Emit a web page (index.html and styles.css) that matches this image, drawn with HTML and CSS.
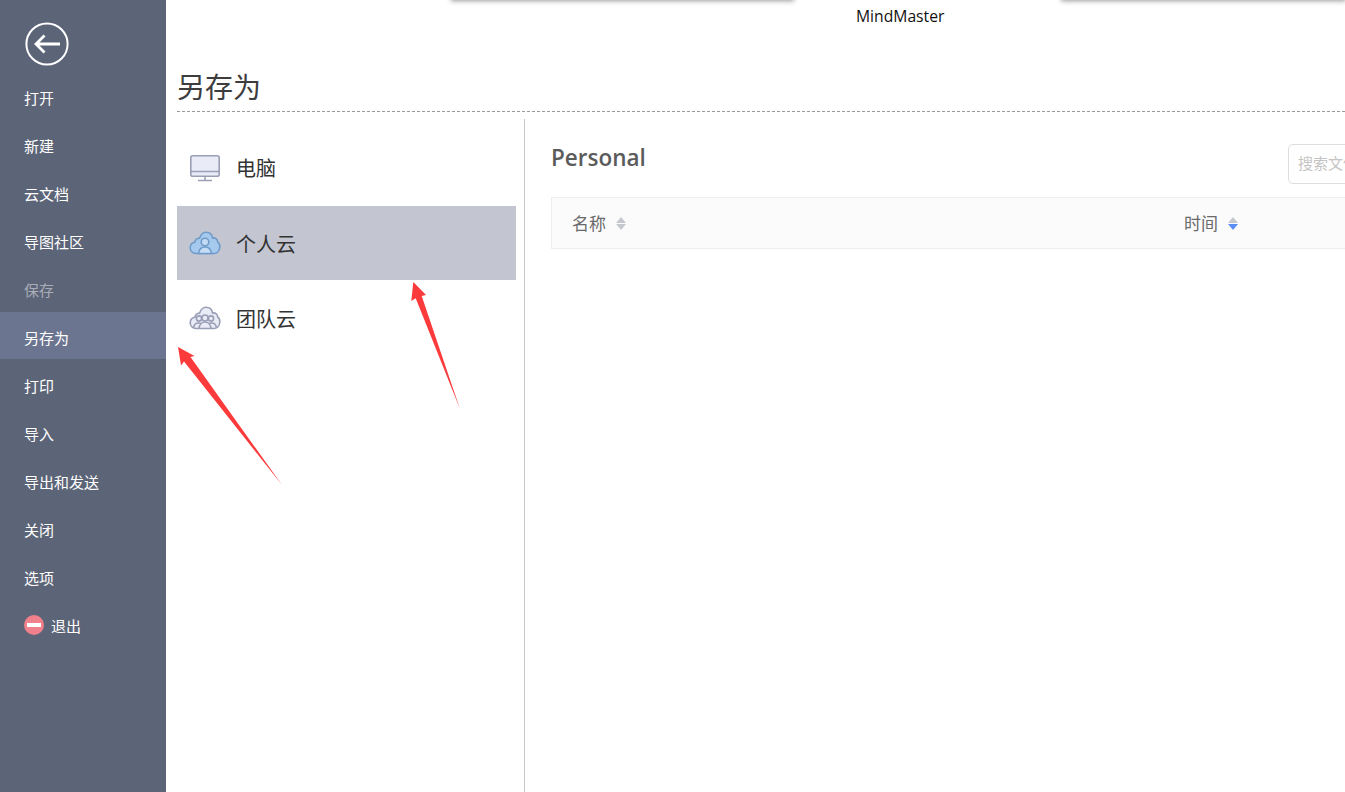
FILE: index.html
```html
<!DOCTYPE html>
<html lang="zh-CN">

<head>
    <meta charset="UTF-8">
    <title>另存为 - MindMaster</title>
    <link rel="stylesheet" href="styles.css">
</head>

<body>
    <aside class="sidebar">
        <div class="back">
            <svg width="44" height="44" viewBox="0 0 44 44" fill="none" stroke="#fff">
                <circle cx="22" cy="22" r="20.6" stroke-width="2" />
                <path d="M35 22H11M19.500 13.500L11 22l8.500 8.500" stroke-width="2.800" />
            </svg>
        </div>
        <nav class="menu">
            <div class="menu-item">打开</div>
            <div class="menu-item">新建</div>
            <div class="menu-item">云文档</div>
            <div class="menu-item">导图社区</div>
            <div class="menu-item disabled">保存</div>
            <div class="menu-item active">另存为</div>
            <div class="menu-item">打印</div>
            <div class="menu-item">导入</div>
            <div class="menu-item">导出和发送</div>
            <div class="menu-item">关闭</div>
            <div class="menu-item">选项</div>
            <div class="menu-item">
                <span class="quit-icon"></span>退出
            </div>
        </nav>
    </aside>

    <main class="main">
        <div class="topbar">
            <span class="tab-shadow tab-left"></span>
            <span class="app-name">MindMaster</span>
            <span class="tab-shadow tab-right"></span>
        </div>

        <h1 class="page-title">另存为</h1>

        <div class="columns">
            <div class="places">
                <div class="place">
                    <svg width="32" height="28" viewBox="0 0 32 28" fill="none" stroke="#9a9fb6" stroke-width="1.6">
                        <rect x="1.800" y="1.800" width="28.400" height="20.400" rx="2" fill="#e9ebf6" />
                        <path d="M2 17.500h28M16 22.500v4M9 26.500h14" />
                    </svg>
                    <span>电脑</span>
                </div>
                <div class="place selected">
                    <svg width="32" height="24" viewBox="0 0 32 24" fill="#a6c9ee" stroke="#6f9bc9" stroke-width="1.600">
                        <path d="M7 22.500c-3.500-.2-5.800-2.800-5.800-5.800 0-2.800 2-5 4.600-5.500C6.500 8.500 8.500 7 10.500 7.300 11.800 3.500 14 1.300 17 1.300c3.500 0 6 2.500 6.600 5.700 3-.5 5 1.600 5.200 4.300 1.400.8 2.200 2.800 2 5-.3 3.500-2.800 6.200-6 6.200z" />
                        <circle cx="16" cy="11" r="3.800" fill="#c4dcf5" />
                        <path d="M9.500 22.500c.5-4 3-6.500 6.500-6.500s6 2.500 6.500 6.500z" fill="#c4dcf5" />
                    </svg>
                    <span>个人云</span>
                </div>
                <div class="place">
                    <svg width="32" height="24" viewBox="0 0 32 24" fill="#e9ebf6" stroke="#9a9fb6" stroke-width="1.600">
                        <path d="M7 22.500c-3.500-.2-5.800-2.800-5.800-5.800 0-2.800 2-5 4.600-5.500C6.500 8.500 8.500 7 10.500 7.300 11.800 3.500 14 1.300 17 1.300c3.500 0 6 2.500 6.600 5.700 3-.5 5 1.600 5.200 4.300 1.400.8 2.200 2.800 2 5-.3 3.500-2.800 6.200-6 6.200z" />
                        <circle cx="10" cy="12.500" r="2.600" />
                        <circle cx="22" cy="12.500" r="2.600" />
                        <circle cx="16" cy="12" r="3" />
                        <path d="M4.500 22c.3-3 2.500-5 5-5 1 0 2 .3 2.800 1M27.500 22c-.3-3-2.500-5-5-5-1 0-2 .3-2.800 1M10 22.500c.4-4 3-6.500 6-6.500s5.600 2.500 6 6.500" fill="none" />
                    </svg>
                    <span>团队云</span>
                </div>
            </div>

            <div class="files">
                <div class="files-head">
                    <h2 class="folder-name">Personal</h2>
                    <div class="search">搜索文件</div>
                </div>
                <div class="file-table">
                    <div class="col col-name">名称
                        <span class="sort"><i class="up"></i><i class="down"></i></span>
                    </div>
                    <div class="col col-time">时间
                        <span class="sort sort-down"><i class="up"></i><i class="down"></i></span>
                    </div>
                </div>
            </div>
        </div>
    </main>

    <!-- annotation arrows drawn over the screenshot -->
    <svg class="arrows" width="1345" height="792" viewBox="0 0 1345 792" fill="#fb3b3b">
        <path d="M178 347L194.500 356 190.500 357 282 485 184 361.500 181 365.500z" />
        <path d="M413.300 282L426 295 421.700 296 460 409 415.700 298.300 411.300 301z" />
    </svg>
</body>

</html>
```

FILE: styles.css
```css
* {
    box-sizing: border-box;
}

html,
body {
    height: 100%;
}

body {
    margin: 0;
    display: flex;
    overflow: hidden;
    background-color: #fff;
    font-family: "Noto Sans CJK SC", "Noto Sans", sans-serif;
    color: #333;
}

/* left menu */
.sidebar {
    width: 166px;
    flex-shrink: 0;
    background-color: #5c6477;
    color: #fff;
}

.back {
    height: 72px;
    padding: 22px 0 0 25px;
}

.back svg {
    display: block;
}

.menu-item {
    display: flex;
    align-items: center;
    height: 48px;
    padding: 2px 0 0 24px;
    font-size: 15px;
}

.menu-item.disabled {
    color: #a9adb8;
}

.menu-item.active {
    height: 47px;
    margin-bottom: 1px;
    padding-top: 3px;
    background-color: #6b7590;
}

.quit-icon {
    position: relative;
    width: 20px;
    height: 20px;
    margin-right: 7px;
    border-radius: 50%;
    background-color: #f0808c;
}

.quit-icon::after {
    content: "";
    position: absolute;
    left: 3px;
    right: 3px;
    top: 8px;
    height: 4px;
    background-color: #fff;
}

/* main area */
.main {
    flex: 1;
    min-width: 0;
    padding-left: 11px;
}

.topbar {
    display: flex;
    height: 68px;
    margin-left: -11px;
    position: relative;
}

.tab-shadow {
    position: absolute;
    top: -4px;
    height: 4px;
    background-color: #bbb;
    box-shadow: 0 0 5px 1px rgba(0, 0, 0, 0.4);
}

.tab-left {
    left: 286px;
    width: 341px;
}

.tab-right {
    left: 896px;
    right: 0;
}

.app-name {
    margin: 6px 0 0 690px;
    font-family: "Open Sans", sans-serif;
    font-size: 15.700px;
    line-height: 20px;
    color: #111;
}

.page-title {
    height: 44px;
    margin: 0;
    font-size: 28px;
    font-weight: 400;
    line-height: 36px;
    color: #3d3d3d;
    border-bottom: 1px dashed #9a9a9a;
}

.columns {
    display: flex;
    height: 681px;
    margin-top: 7px;
}

.places {
    width: 348px;
    padding: 13px 8px 0 0;
    border-right: 1px solid #c8c8c8;
}

.place {
    display: flex;
    align-items: center;
    gap: 15px;
    height: 74px;
    padding-left: 12px;
    font-size: 20px;
}

.place:first-child {
    padding-bottom: 3px;
}

.place:last-child {
    padding-top: 2px;
}

.place.selected {
    background-color: #c3c6d0;
}

.files {
    flex: 1;
    min-width: 0;
    padding: 0 0 0 26px;
    overflow: hidden;
}

.files-head {
    display: flex;
    justify-content: space-between;
    height: 78px;
    padding-top: 25px;
}

.folder-name {
    margin: 0;
    font-family: "Open Sans", sans-serif;
    font-size: 22.500px;
    font-weight: 600;
    line-height: 28px;
    color: #5b5b5b;
}

.search {
    flex-shrink: 0;
    width: 120px;
    height: 40px;
    margin-right: -63px;
    padding-left: 9px;
    border: 1px solid #dedede;
    border-radius: 5px;
    font-size: 15px;
    line-height: 36px;
    color: #c4c4c4;
}

.file-table {
    display: flex;
    height: 52px;
    margin-right: -2px;
    border: 1px solid #eee;
    background-color: #fbfbfb;
    font-size: 17px;
    color: #6a6a6a;
}

.col {
    display: flex;
    align-items: center;
    gap: 10px;
    padding-bottom: 2px;
}

.col-name {
    width: 632px;
    padding-left: 20px;
}

.sort {
    display: flex;
    flex-direction: column;
    gap: 1px;
    padding-top: 2px;
}

.sort i {
    display: block;
    width: 0;
    height: 0;
    border-left: 5.500px solid transparent;
    border-right: 5.500px solid transparent;
}

.sort .up {
    border-bottom: 6px solid #c5c8cf;
}

.sort .down {
    border-top: 6px solid #c5c8cf;
}

.sort-down .down {
    border-top-color: #5a8cf5;
}

.arrows {
    position: absolute;
    left: 0;
    top: 0;
    pointer-events: none;
}
```
